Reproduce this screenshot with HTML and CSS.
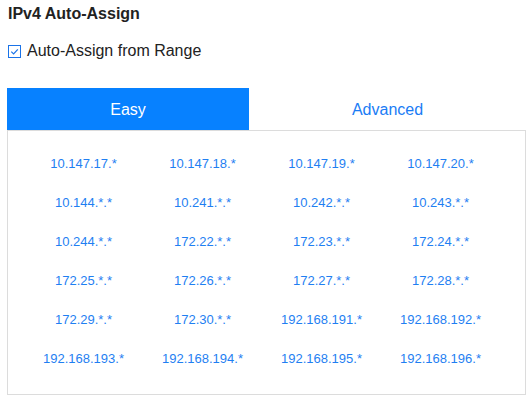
FILE: index.html
```html
<!DOCTYPE html>
<html lang="en">

<head>
    <meta charset="UTF-8">
    <title>IPv4 Auto-Assign</title>
    <link rel="stylesheet" href="styles.css">
</head>

<body>
    <div class="page">
        <h3 class="title">IPv4 Auto-Assign</h3>

        <label class="check-row">
            <span class="check-box">
                <svg viewBox="0 0 12 12">
                    <polyline points="2.5,6.2 5,8.6 9.6,3.6" />
                </svg>
            </span>
            Auto-Assign from Range
        </label>

        <!-- Tabs -->
        <div class="tabs">
            <div class="tab active">Easy</div>
            <div class="tab">Advanced</div>
        </div>

        <div class="panel">
            <a class="range">10.147.17.*</a>
            <a class="range">10.147.18.*</a>
            <a class="range">10.147.19.*</a>
            <a class="range">10.147.20.*</a>
            <a class="range">10.144.*.*</a>
            <a class="range">10.241.*.*</a>
            <a class="range">10.242.*.*</a>
            <a class="range">10.243.*.*</a>
            <a class="range">10.244.*.*</a>
            <a class="range">172.22.*.*</a>
            <a class="range">172.23.*.*</a>
            <a class="range">172.24.*.*</a>
            <a class="range">172.25.*.*</a>
            <a class="range">172.26.*.*</a>
            <a class="range">172.27.*.*</a>
            <a class="range">172.28.*.*</a>
            <a class="range">172.29.*.*</a>
            <a class="range">172.30.*.*</a>
            <a class="range">192.168.191.*</a>
            <a class="range">192.168.192.*</a>
            <a class="range">192.168.193.*</a>
            <a class="range">192.168.194.*</a>
            <a class="range">192.168.195.*</a>
            <a class="range">192.168.196.*</a>
        </div>
    </div>
</body>

</html>
```

FILE: styles.css
```css
body {
    margin: 0;
    background: #fff;
    font-family: "Liberation Sans", Arial, sans-serif;
    color: #222;
}

.page {
    padding: 5px 6px 0 7px;
}

.title {
    margin: 0 0 0 1px;
    font-size: 16px;
    font-weight: bold;
    line-height: 18px;
}

.check-row {
    display: flex;
    align-items: center;
    gap: 6px;
    margin: 19px 0 0 1px;
    font-size: 16px;
    line-height: 18px;
}

.check-box {
    width: 13px;
    height: 13px;
    box-sizing: border-box;
    border: 1px solid #1a73e8;
    background: #fff;
}

.check-box svg {
    display: block;
    width: 11px;
    height: 11px;
    fill: none;
    stroke: #1a73e8;
    stroke-width: 1.3px;
}

/* Tabs */
.tabs {
    display: flex;
    margin-top: 28px;
    height: 42px;
}

.tab {
    flex: 1;
    display: flex;
    align-items: center;
    justify-content: center;
    font-size: 16px;
    color: #1a7cf5;
    padding-top: 1px;
}

.tab.active {
    flex: 0 0 242px;
    background: #0781ff;
    color: #fff;
}

.panel {
    display: grid;
    grid-template-columns: repeat(4, 119px);
    grid-auto-rows: 39px;
    padding: 13px 0 16px 16px;
    border: 1px solid #dcdcdc;
}

.range {
    display: flex;
    align-items: center;
    justify-content: center;
    font-size: 13px;
    color: #1f7ff2;
    cursor: pointer;
}
```
